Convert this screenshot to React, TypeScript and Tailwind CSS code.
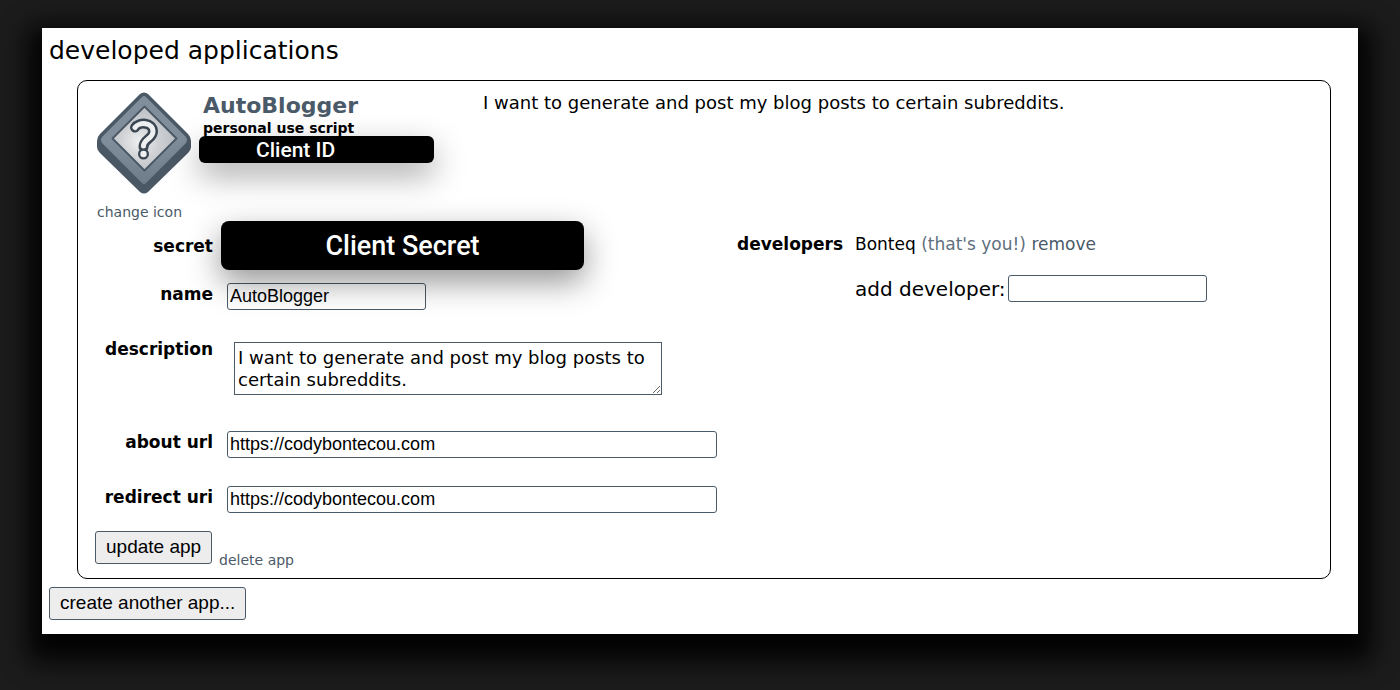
import type { ReactNode } from 'react';

const fieldClass =
  "h-[27px] rounded-[3px] border border-[#4a5a68] bg-white px-0.5 font-['Liberation_Sans',sans-serif] text-lg leading-6 text-black outline-none";
const buttonClass =
  "h-[33px] rounded-[3px] border border-[#4a5a68] bg-[#ededee] px-[10px] pb-0.5 font-['Liberation_Sans',sans-serif] text-[19px] leading-6 text-black";

function AppIcon() {
  return (
    <svg width="94" height="102" viewBox="0 0 94 102" aria-hidden="true">
      <defs>
        <radialGradient id="plate" cx="0.42" cy="0.55" r="0.55">
          <stop offset="0" stopColor="#eeeff0" />
          <stop offset="0.5" stopColor="#d0d2d5" />
          <stop offset="1" stopColor="#bcc0c6" />
        </radialGradient>
        <linearGradient id="rim" x1="0" y1="0" x2="0" y2="1">
          <stop offset="0.5" stopColor="#808d9b" />
          <stop offset="1" stopColor="#6f7c89" />
        </linearGradient>
      </defs>
      <path d="M43 2Q47 -1 51 2L91 42Q94 45 94 49V55Q94 58 91 61L51 100Q47 103 43 100L3 61Q0 58 0 55V49Q0 45 3 42Z" fill="#4a5764" />
      <path d="M45 5Q47 3 49 5L89 45Q91 48 89 51L49 91Q47 93 45 91L5 51Q3 48 5 45Z" fill="url(#rim)" />
      <path d="M47.500 14.500L79.500 46.500L47.500 78.500L15.500 46.500Z" fill="url(#plate)" stroke="#4a5764" strokeWidth="1.8" strokeLinejoin="round" />
      <path d="M38 35.500C42 29.500 56 30 56 39.500C56 47 46.500 47 46.500 55" fill="none" stroke="#3a4651" strokeWidth="10" strokeLinecap="round" strokeLinejoin="round" />
      <circle cx="46.500" cy="62" r="5.500" fill="#3a4651" />
      <path d="M38 35.500C42 29.500 56 30 56 39.500C56 47 46.500 47 46.500 54" fill="none" stroke="#eeeff0" strokeWidth="5" strokeLinecap="round" strokeLinejoin="round" />
      <circle cx="46.500" cy="62" r="3.200" fill="#eeeff0" />
    </svg>
  );
}

function Row({ id, label, children, className = '' }: { id: string; label: string; children: ReactNode; className?: string }) {
  return (
    <div className={`flex items-start gap-3.5 ${className}`}>
      <label htmlFor={id} className="w-[118px] shrink-0 text-right text-[17px] leading-[22px] font-bold">
        {label}
      </label>
      {children}
    </div>
  );
}

export default function App() {
  return (
    <main className="min-h-screen bg-[#1c1c1c] px-[42px] pt-7 pb-14 font-['DejaVu_Sans',sans-serif] text-black">
      <section className="bg-white px-[7px] pt-[7px] pb-3.5 shadow-[0_13px_24px_14px_#030303]">
        <h1 className="text-[25px] leading-8">developed applications</h1>

        <article className="mt-[13px] mr-5 ml-7 rounded-[10px] border border-black px-[17px] pb-3.5">
          <header className="flex h-[140px] items-start pt-[11px]">
            <div className="flex w-[108px] shrink-0 flex-col items-start pl-0.5">
              <AppIcon />
              <a href="#icon" className="mt-2 text-sm leading-5 whitespace-nowrap text-[#4a5a68]">change icon</a>
            </div>
            <div className="w-[280px] shrink-0">
              <h2 className="text-[22px] leading-7 font-bold text-[#4a5a68]">
                <a href="#app">AutoBlogger</a>
              </h2>
              <p className="text-sm leading-4 font-bold">personal use script</p>
              <div className="relative z-10 -ml-1 flex h-[27px] w-[235px] items-center rounded-md bg-black pl-[57px] font-[Roboto,sans-serif] text-[21px] leading-6 font-medium text-white shadow-[0_12px_32px_rgba(0,0,0,0.36)]">
                Client ID
              </div>
            </div>
            <p className="text-lg leading-[22px]">I want to generate and post my blog posts to certain subreddits.</p>
          </header>

          <div className="flex items-start gap-5">
            <form className="w-[622px]" onSubmit={(e) => e.preventDefault()}>
              <div className="flex items-center gap-2">
                <span className="w-[118px] shrink-0 text-right text-[17px] leading-[22px] font-bold">secret</span>
                <div className="relative z-10 flex h-[49px] w-[363px] items-center justify-center rounded-lg bg-black font-[Roboto,sans-serif] text-[27px] leading-8 font-medium text-white shadow-[0_12px_32px_rgba(0,0,0,0.42)]">
                  Client Secret
                </div>
              </div>
              <Row id="name" label="name" className="mt-[13px]">
                <input id="name" defaultValue="AutoBlogger" className={`${fieldClass} w-[199px]`} />
              </Row>
              <Row id="description" label="description" className="mt-7">
                <textarea
                  id="description"
                  defaultValue="I want to generate and post my blog posts to certain subreddits."
                  className="mt-1 ml-[7px] block h-[53px] w-[428px] overflow-hidden border border-[#4a5a68] bg-white px-[3px] py-1 text-lg leading-[22px] outline-none"
                />
              </Row>
              <Row id="about" label="about url" className="mt-9">
                <input id="about" defaultValue="https://codybontecou.com" className={`${fieldClass} w-[490px]`} />
              </Row>
              <Row id="redirect" label="redirect uri" className="mt-7">
                <input id="redirect" defaultValue="https://codybontecou.com" className={`${fieldClass} w-[490px]`} />
              </Row>
              <div className="mt-[18px] flex items-end gap-[7px]">
                <button type="submit" className={buttonClass}>update app</button>
                <a href="#delete" className="-mb-1 text-sm leading-4 text-[#4a5a68]">delete app</a>
              </div>
            </form>

            <div className="flex items-start gap-3 pt-3 text-[17px] leading-[22px]">
              <h3 className="font-bold">developers</h3>
              <div>
                <p>
                  Bonteq <span className="text-[#5f6f7e]">(that's you!)</span>{' '}
                  <a href="#remove" className="text-[#4a5a68]">remove</a>
                </p>
                <div className="mt-5 flex items-center gap-0.5">
                  <label htmlFor="developer" className="text-xl leading-6 whitespace-nowrap">add developer:</label>
                  <input id="developer" className={`${fieldClass} w-[199px]`} />
                </div>
              </div>
            </div>
          </div>
        </article>

        <button type="button" className={`${buttonClass} mt-2 block`}>create another app...</button>
      </section>
    </main>
  );
}
